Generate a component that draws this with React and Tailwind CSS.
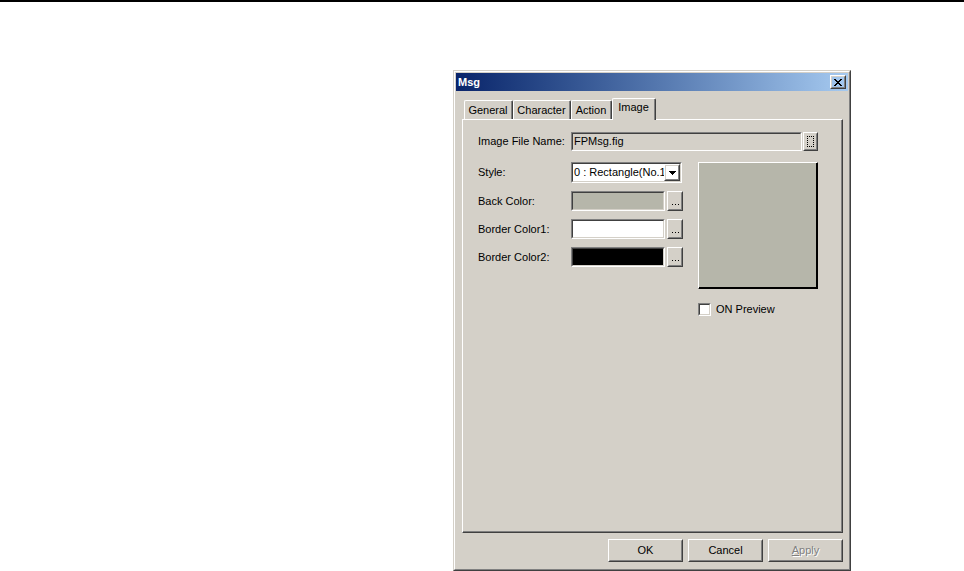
import React from "react";

const font = { fontFamily: '"Liberation Sans", Arial, sans-serif' };

function Raised({ className = "", innerClassName = "", children }) {
  return (
    <div className={"border border-t-white border-l-white border-r-[#404040] border-b-[#404040] " + className}>
      <div className={"h-full w-full border border-t-[#d4d0c8] border-l-[#d4d0c8] border-r-[#808080] border-b-[#808080] " + innerClassName}>
        {children}
      </div>
    </div>
  );
}

function Sunken({ className = "", innerClassName = "", children }) {
  return (
    <div className={"border border-t-[#808080] border-l-[#808080] border-r-white border-b-white " + className}>
      <div className={"h-full w-full border border-t-[#404040] border-l-[#404040] border-r-[#d4d0c8] border-b-[#d4d0c8] " + innerClassName}>
        {children}
      </div>
    </div>
  );
}

function Tab({ label, width, selected }) {
  if (selected) {
    return (
      <div
        className="relative z-10 -mb-px h-[22px] rounded-tl-[2px] rounded-tr-[2px] border-l border-t border-r border-l-white border-t-white border-r-[#404040] bg-[#d4d0c8]"
        style={{ width }}
      >
        <div className="flex h-full w-full items-start justify-center border-r border-r-[#808080] pt-[3px]">
          <span>{label}</span>
        </div>
      </div>
    );
  }
  return (
    <div
      className="h-[19px] rounded-tl-[2px] rounded-tr-[2px] border-l border-t border-r border-l-white border-t-white border-r-[#404040]"
      style={{ width }}
    >
      <div className="flex h-full w-full items-center justify-center border-r border-r-[#808080]">
        <span>{label}</span>
      </div>
    </div>
  );
}

function DotsButton() {
  return (
    <Raised className="h-[20px] w-[16px]" innerClassName="flex items-end justify-center pb-[4px]">
      <svg width="7" height="1" viewBox="0 0 7 1" shapeRendering="crispEdges">
        <path d="M0 0h1v1H0zM3 0h1v1H3zM6 0h1v1H6z" fill="#000" />
      </svg>
    </Raised>
  );
}

function ColorRow({ label, color }) {
  return (
    <div className="flex items-center">
      <div className="w-[93px]">{label}</div>
      <Sunken className="h-[20px] w-[94px]" innerClassName={color} />
      <div className="ml-[2px]">
        <DotsButton />
      </div>
    </div>
  );
}

export default function App() {
  return (
    <div className="relative h-[571px] w-[964px] overflow-hidden bg-white text-[11px] leading-none text-black" style={font}>
      <div className="h-[2px] w-full bg-black" />
      <div className="ml-[453px] mt-[68px] h-[501px] w-[398px] border border-t-[#d4d0c8] border-l-[#d4d0c8] border-r-[#404040] border-b-[#404040] bg-[#d4d0c8]">
        <div className="flex h-full w-full flex-col border border-t-white border-l-white border-r-[#808080] border-b-[#808080] p-px">
          {/* Title bar */}
          <div className="flex h-[18px] items-center justify-between bg-gradient-to-r from-[#0a246a] to-[#a6caf0] pl-[2px] pr-[2px]">
            <span className="text-[11px] font-bold text-white">Msg</span>
            <Raised className="h-[14px] w-[16px]" innerClassName="flex items-center justify-center">
              <svg width="8" height="7" viewBox="0 0 8 7" shapeRendering="crispEdges">
                <path d="M0 0h2v1H0zM6 0h2v1H6zM1 1h2v1H1zM5 1h2v1H5zM2 2h4v1H2zM3 3h2v1H3zM2 4h4v1H2zM1 5h2v1H1zM5 5h2v1H5zM0 6h2v1H0zM6 6h2v1H6z" fill="#000" />
              </svg>
            </Raised>
          </div>

          {/* Body */}
          <div className="flex flex-1 flex-col pl-[6px] pt-[7px]">
            {/* Tabs */}
            <div className="flex h-[21px] items-end pl-[2px]">
              <Tab label="General" width={49} />
              <Tab label="Character" width={58} />
              <Tab label="Action" width={41} />
              <Tab label="Image" width={44} selected />
            </div>

            {/* Panel */}
            <div className="h-[414px] w-[381px] border border-t-white border-l-white border-r-[#404040] border-b-[#404040]">
              <div className="h-full w-full border-r border-b border-r-[#808080] border-b-[#808080] pl-[15px] pt-[12px]">
                {/* Image File Name */}
                <div className="flex items-center">
                  <div className="w-[93px]">Image File Name:</div>
                  <Sunken className="h-[19px] w-[231px]" innerClassName="flex items-center bg-[#d4d0c8] pl-[1px]">
                    <span>FPMsg.fig</span>
                  </Sunken>
                  <div className="ml-[1px]">
                    <Raised className="h-[19px] w-[15px]" innerClassName="flex items-center justify-center">
                      <div className="h-[11px] w-[7px] border border-dotted border-black" />
                    </Raised>
                  </div>
                </div>

                <div className="mt-[11px] flex">
                  {/* Left column */}
                  <div className="flex flex-col gap-[8px]">
                    <div className="flex items-center">
                      <div className="w-[93px]">Style:</div>
                      <Sunken className="h-[21px] w-[111px]" innerClassName="flex items-center justify-between bg-white">
                        <span className="min-w-0 overflow-hidden whitespace-nowrap pl-[1px]">0 : Rectangle(No.1</span>
                        <Raised className="h-[17px] w-[16px] shrink-0" innerClassName="flex items-center justify-center">
                          <svg width="7" height="4" viewBox="0 0 7 4" shapeRendering="crispEdges">
                            <path d="M0 0h7v1H0zM1 1h5v1H1zM2 2h3v1H2zM3 3h1v1H3z" fill="#000" />
                          </svg>
                        </Raised>
                      </Sunken>
                    </div>
                    <ColorRow label="Back Color:" color="bg-[#b6b6aa]" />
                    <ColorRow label="Border Color1:" color="bg-white" />
                    <ColorRow label="Border Color2:" color="bg-black" />
                  </div>

                  {/* Right column */}
                  <div className="ml-[15px] flex flex-col">
                    <div className="h-[127px] w-[120px] border border-t-white border-l-white border-r-black border-b-black">
                      <div className="h-full w-full border-r border-b border-r-black border-b-black bg-[#b6b6aa]" />
                    </div>
                    <div className="mt-[14px] flex items-center">
                      <Sunken className="h-[13px] w-[13px]" innerClassName="bg-white" />
                      <span className="ml-[5px]">ON Preview</span>
                    </div>
                  </div>
                </div>
              </div>
            </div>

            {/* Buttons */}
            <div className="mt-[6px] flex justify-end gap-[5px] pr-[5px]">
              <Raised className="h-[23px] w-[75px]" innerClassName="flex items-center justify-center">
                <span>OK</span>
              </Raised>
              <Raised className="h-[23px] w-[75px]" innerClassName="flex items-center justify-center">
                <span>Cancel</span>
              </Raised>
              <Raised className="h-[23px] w-[75px]" innerClassName="flex items-center justify-center">
                <span className="text-[#808080] [text-shadow:1px_1px_0_#ffffff]">
                  <span className="underline">A</span>pply
                </span>
              </Raised>
            </div>
          </div>
        </div>
      </div>
    </div>
  );
}
